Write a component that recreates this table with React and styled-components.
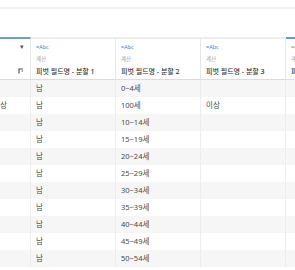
import styled, { createGlobalStyle } from "styled-components";

const GlobalStyle = createGlobalStyle`
  html, body {
    margin: 0;
    padding: 0;
    background: #fff;
  }
  body {
    font-family: "Noto Sans", "Noto Sans CJK KR", sans-serif;
  }
`;

const columns = [
  { key: "c0", width: 43, accent: "#6f9fc8", pinned: true },
  { key: "c1", width: 85, type: "=Abc", title: "피벗 필드명 - 분할 1" },
  { key: "c2", width: 85, type: "=Abc", title: "피벗 필드명 - 분할 2" },
  { key: "c3", width: 85, type: "=Abc", title: "피벗 필드명 - 분할 3" },
  { key: "c4", width: 85, type: "=#", title: "피벗 필드명 - 분할 4", numeric: true, accent: "#5f9fc0" },
];

const ages = [
  "0~4세", "100세", "10~14세", "15~19세", "20~24세", "25~29세",
  "30~34세", "35~39세", "40~44세", "45~49세", "50~54세",
];

const rows = ages.map((age, i) => ({
  c0: i === 1 ? "이상" : "",
  c1: "남",
  c2: age,
  c3: i === 1 ? "이상" : "",
  c4: "",
}));

const gridTemplate = columns.map((c) => c.width + "px").join(" ");

const App = () => {
  return (
    <Page>
      <GlobalStyle />
      <Toolbar />
      <Viewport>
        <Table $cols={gridTemplate}>
          {columns.map((col) => (
            <HeadCell key={col.key} $accent={col.accent}>
              {col.pinned ? (
                <PinnedHead>
                  <Caret>▾</Caret>
                  <SplitIcon viewBox="0 0 6 6">
                    <path d="M1 5.5 V1 H5" fill="none" stroke="#555" strokeWidth="1.2" />
                    <rect x="3.6" y="2.4" width="1.2" height="1.2" fill="#555" />
                  </SplitIcon>
                </PinnedHead>
              ) : (
                <>
                  <TypeTag $numeric={col.numeric}>{col.type}</TypeTag>
                  <CalcLabel>계산</CalcLabel>
                  <Title>{col.title}</Title>
                </>
              )}
            </HeadCell>
          ))}
          {rows.map((row, i) =>
            columns.map((col) => (
              <Cell key={col.key + i} $striped={i % 2 === 0}>
                {row[col.key]}
              </Cell>
            ))
          )}
        </Table>
      </Viewport>
    </Page>
  );
};

const Page = styled.div`
  width: 295px;
  height: 270px;
  overflow: hidden;
  background: #fff;
`;

const Toolbar = styled.div`
  height: 7px;
  border-bottom: 2px solid #f0f0f0;
  margin-bottom: 28px;
`;

const Viewport = styled.div`
  overflow: hidden;
  width: 295px;
`;

const Table = styled.div`
  display: grid;
  grid-template-columns: ${(p) => p.$cols};
  margin-left: -12px;
  width: max-content;
`;

const HeadCell = styled.div`
  height: 40px;
  box-sizing: content-box;
  border-top: 2px solid ${(p) => p.$accent || "#ececec"};
  border-right: 1px solid #e6e6e6;
  border-bottom: 1px solid #dcdcdc;
  padding: 0 0 0 5px;
  display: flex;
  flex-direction: column;
  overflow: hidden;
  white-space: nowrap;
`;

const PinnedHead = styled.div`
  flex: 1;
  display: flex;
  flex-direction: column;
  align-items: flex-end;
  justify-content: space-between;
  padding: 4px 6px 5px 0;
`;

const Caret = styled.span`
  font-size: 7px;
  line-height: 7px;
  color: #555;
`;

const SplitIcon = styled.svg`
  width: 6px;
  height: 6px;
`;

const TypeTag = styled.span`
  font-size: 5.5px;
  line-height: 10px;
  margin-top: 3px;
  color: ${(p) => (p.$numeric ? "#3a9a7a" : "#4a7fc0")};
`;

const CalcLabel = styled.span`
  font-size: 5.5px;
  line-height: 10px;
  color: #a0a0a0;
  margin-top: 2px;
`;

const Title = styled.span`
  font-size: 7px;
  line-height: 12px;
  color: #333;
  font-weight: 500;
  margin-top: 2px;
`;

const Cell = styled.div`
  height: 17px;
  box-sizing: border-box;
  padding-left: 5px;
  border-right: 1px solid #ededed;
  background: ${(p) => (p.$striped ? "#f6f6f6" : "#fff")};
  font-size: 7.5px;
  line-height: 17px;
  color: #4a4a4a;
  white-space: nowrap;
  overflow: hidden;
`;

export default App;
